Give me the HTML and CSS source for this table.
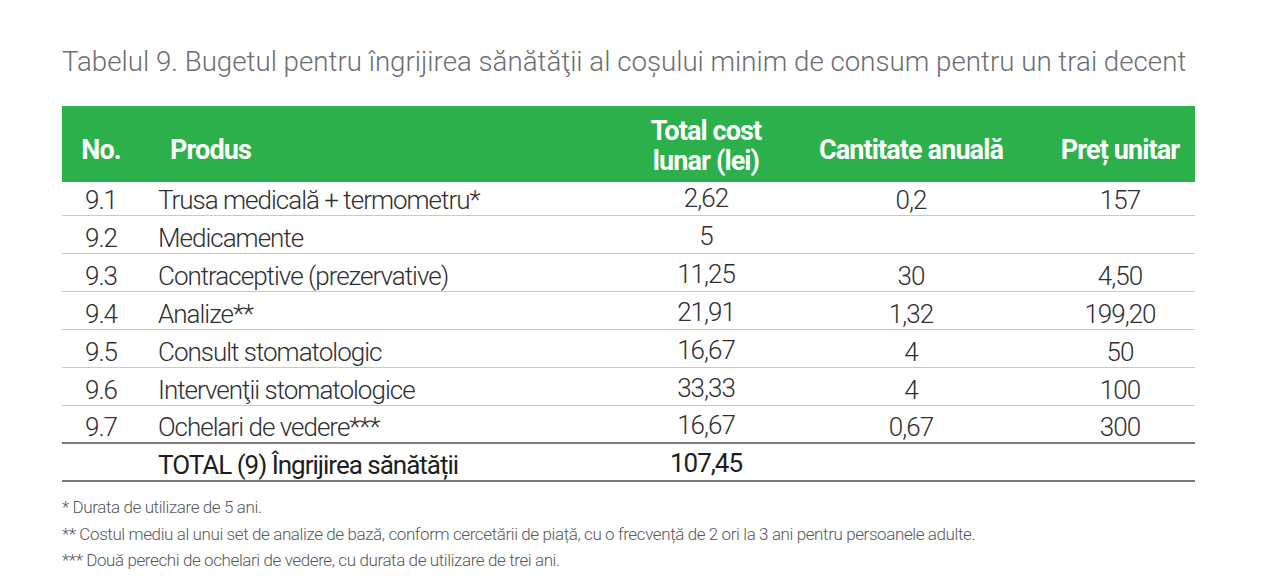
FILE: index.html
```html
<!DOCTYPE html>
<html lang="ro">
<head>
<meta charset="utf-8">
<title>Tabelul 9</title>
<link rel="stylesheet" href="styles.css">
</head>
<body>
<div class="page">
  <h1 class="title">Tabelul 9. Bugetul pentru îngrijirea sănătăţii al coşului minim de consum pentru un trai decent</h1>
  <table class="budget">
    <thead>
      <tr>
        <th class="c-no">No.</th>
        <th class="c-prod">Produs</th>
        <th class="c-cost two-line">Total cost<br>lunar (lei)</th>
        <th class="c-qty">Cantitate anuală</th>
        <th class="c-price">Preț unitar</th>
      </tr>
    </thead>
    <tbody>
      <tr class="first"><td class="c-no">9.1</td><td class="c-prod">Trusa medicală + termometru*</td><td class="c-cost">2,62</td><td class="c-qty">0,2</td><td class="c-price">157</td></tr>
      <tr><td class="c-no">9.2</td><td class="c-prod">Medicamente</td><td class="c-cost">5</td><td class="c-qty"></td><td class="c-price"></td></tr>
      <tr><td class="c-no">9.3</td><td class="c-prod">Contraceptive (prezervative)</td><td class="c-cost">11,25</td><td class="c-qty">30</td><td class="c-price">4,50</td></tr>
      <tr><td class="c-no">9.4</td><td class="c-prod">Analize**</td><td class="c-cost">21,91</td><td class="c-qty">1,32</td><td class="c-price">199,20</td></tr>
      <tr><td class="c-no">9.5</td><td class="c-prod">Consult stomatologic</td><td class="c-cost">16,67</td><td class="c-qty">4</td><td class="c-price">50</td></tr>
      <tr><td class="c-no">9.6</td><td class="c-prod">Intervenţii stomatologice</td><td class="c-cost">33,33</td><td class="c-qty">4</td><td class="c-price">100</td></tr>
      <tr class="last"><td class="c-no">9.7</td><td class="c-prod">Ochelari de vedere***</td><td class="c-cost">16,67</td><td class="c-qty">0,67</td><td class="c-price">300</td></tr>
      <tr class="total"><td class="c-no"></td><td class="c-prod">TOTAL (9) Îngrijirea sănătății</td><td class="c-cost">107,45</td><td class="c-qty"></td><td class="c-price"></td></tr>
    </tbody>
  </table>
  <div class="notes">
    <p>* Durata de utilizare de 5 ani.</p>
    <p>** Costul mediu al unui set de analize de bază, conform cercetării de piață, cu o frecvență de 2 ori la 3 ani pentru persoanele adulte.</p>
    <p>*** Două perechi de ochelari de vedere, cu durata de utilizare de trei ani.</p>
  </div>
</div>
</body>
</html>
```

FILE: styles.css
```css
html, body {
  margin: 0;
  padding: 0;
  background: #ffffff;
}
body {
  font-family: Roboto, "Liberation Sans", sans-serif;
}
.page {
  padding: 45px 0 0 62px;
  width: 1133px;
}
.title {
  margin: 0;
  font-size: 27.7px;
  line-height: 34px;
  font-weight: 300;
  color: #6d6e71;
  white-space: nowrap;
}
.budget {
  margin-top: 27px;
  width: 1133px;
  border-collapse: collapse;
  table-layout: fixed;
}
.budget th,
.budget td {
  box-sizing: border-box;
}
.budget th {
  background: #2bb04b;
  color: #ffffff;
  font-weight: 700;
  font-size: 27px;
  line-height: 30px;
  letter-spacing: -0.9px;
  height: 75px;
  padding: 14px 0 0 0;
  text-align: center;
  border-bottom: 1px solid #5f8d61;
}
.budget th.two-line {
  padding-top: 6px;
}
.budget td {
  font-size: 26px;
  font-weight: 300;
  color: #2f2f33;
  letter-spacing: -1px;
  height: 38px;
  padding: 0;
  line-height: 30px;
  border-bottom: 1px solid #a9dcbf;
  text-align: center;
  vertical-align: bottom;
  white-space: nowrap;
}
.budget tr.first td { height: 34px; }
.budget tr.last td { border-bottom: 2px solid #7b7b7b; }
.budget tr.total td {
  font-weight: 400;
  border-bottom: 2px solid #7b7b7b;
  color: #1e1e20;
}
.budget td.c-cost { padding-bottom: 2px; }
.c-no { width: 78px; }
.c-prod { width: 480px; }
.c-cost { width: 172px; }
.c-qty { width: 238px; }
.c-price { width: 165px; }
.budget th.c-prod { text-align: left; padding-left: 30px; }
.budget td.c-prod { text-align: left; padding-left: 18px; }
.budget .c-price { padding-left: 15px; }
.notes {
  margin-top: 12px;
  color: #58585b;
  font-size: 17px;
  font-weight: 300;
  letter-spacing: -0.4px;
}
.notes p {
  margin: 0;
  line-height: 26.5px;
}
```
